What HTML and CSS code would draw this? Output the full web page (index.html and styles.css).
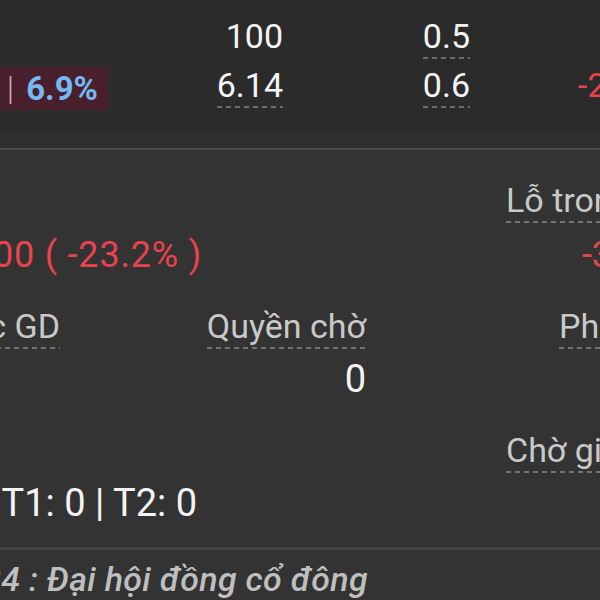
FILE: index.html
```html
<!DOCTYPE html>
<html lang="vi">
<head>
<meta charset="utf-8">
<title>Danh mục</title>
<link rel="stylesheet" href="styles.css">
</head>
<body>
<div class="page">
  <section class="holdings">
    <div class="cell sym"></div>
    <div class="cell num">100</div>
    <div class="cell num dash">0.5</div>
    <div class="cell"></div>

    <div class="cell sym"><span class="badge">VNM <span class="pipe">|</span> 6.9%</span></div>
    <div class="cell num dash">6.14</div>
    <div class="cell num dash">0.6</div>
    <div class="cell loss-cell"><span class="red">-28,400</span></div>
  </section>
  <div class="sep"></div>

  <section class="summary">
    <div class="pair">
      <div class="field wide">
        <span class="label">Lãi/lỗ</span>
        <span class="value big red spaced">-12,345,600 ( -23.2% )</span>
      </div>
      <div class="field">
        <span class="label dash">Lỗ trong ngày</span>
        <span class="value big red tail">-312,000</span>
      </div>
    </div>

    <div class="triple">
      <div class="field">
        <span class="label dash">KL được GD</span>
        <span class="value">&nbsp;</span>
      </div>
      <div class="field">
        <span class="label dash">Quyền chờ</span>
        <span class="value">0</span>
      </div>
      <div class="field">
        <span class="label dash">Phí chờ</span>
        <span class="value">0</span>
      </div>
    </div>

    <div class="pair">
      <div class="field wide narrow">
        <span class="label">Về</span>
        <span class="value">T0: 0 | T1: 0 | T2: 0</span>
      </div>
      <div class="field">
        <span class="label dash">Chờ giao</span>
        <span class="value">0</span>
      </div>
    </div>
  </section>

  <section class="events">
    <p class="event">25/04/2024 : Đại hội đồng cổ đông</p>
  </section>
</div>
</body>
</html>
```

FILE: styles.css
```css
html, body {
  margin: 0;
  padding: 0;
  overflow: hidden;
  background: #333333;
}

body {
  font-family: Roboto, "Liberation Sans", sans-serif;
  color: #f2f2f2;
}

.page {
  margin-left: -246px;
  width: 1100px;
}

.holdings {
  background: #2b2b2b;
  display: grid;
  grid-template-columns: 354px 175px 187px 1fr;
  row-gap: 6px;
  padding: 16px 0 23px;
  align-items: start;
}

.cell {
  font-size: 34px;
  line-height: 40px;
  padding-bottom: 3px;
  white-space: nowrap;
}

.num {
  justify-self: end;
  color: #f4f4f4;
}

.dash {
  background: repeating-linear-gradient(to right, #6c6c6c 0 5px, transparent 5px 9px) left bottom / 100% 2px no-repeat;
}

.sym {
  justify-self: end;
  padding-bottom: 0;
}

.badge {
  display: block;
  margin-top: 2px;
  padding: 2px 10px 1px 20px;
  background: #4a1f2c;
  border-radius: 2px;
  color: #74b8f4;
  font-weight: 700;
  font-size: 33px;
  line-height: 40px;
}

.pipe {
  color: #cfa7ad;
  font-weight: 300;
  margin-right: 4px;
}

.loss-cell {
  padding-left: 108px;
}

.red {
  color: #e8434f;
}

.sep {
  height: 15px;
  background: #2f2f2f;
  border-bottom: 2px solid #4a4a4a;
}

.summary {
  display: flex;
  flex-direction: column;
  gap: 31px;
  padding: 30px 0 24px;
  border-bottom: 3px solid #434343;
}

.pair {
  display: grid;
  grid-template-columns: 752px 1fr;
  align-items: start;
}

.triple {
  display: grid;
  grid-template-columns: 306px 306px 306px;
  align-items: start;
}

.triple .field {
  justify-self: end;
}

.field {
  display: inline-flex;
  flex-direction: column;
  justify-self: start;
  white-space: nowrap;
}

.field.wide {
  width: 448px;
}

.field.wide.narrow {
  width: 443px;
}

.label {
  align-self: flex-start;
  font-size: 34px;
  line-height: 40px;
  padding-bottom: 3px;
  color: #c9c9c9;
}

.label.dash {
  background: repeating-linear-gradient(to right, #737373 0 5px, transparent 5px 9px) left bottom / 100% 2px no-repeat;
}

.value {
  align-self: flex-end;
  margin-top: 10px;
  font-size: 38px;
  line-height: 40px;
  color: #f4f4f4;
}

.value.big {
  margin-top: 12px;
  font-size: 36px;
}

.value.spaced {
  letter-spacing: 0.8px;
}

.value.tail {
  margin-right: -8px;
}

.value.red {
  color: #e8434f;
}

.events {
  padding-top: 9px;
}

.event {
  margin: 0;
  width: 614px;
  text-align: right;
  font-size: 34px;
  line-height: 40px;
  letter-spacing: 0.3px;
  font-style: italic;
  font-weight: 500;
  color: #bfbfbf;
  white-space: nowrap;
}
```
